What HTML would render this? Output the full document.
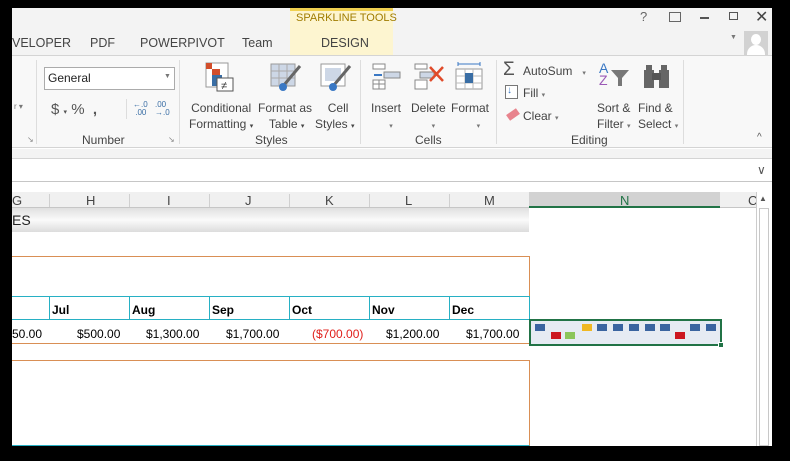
<!DOCTYPE html>
<html><head><meta charset="utf-8"><style>
*{margin:0;padding:0;box-sizing:border-box}
body{width:790px;height:461px;background:#000;position:relative;overflow:hidden;font-family:"Segoe UI","Liberation Sans",sans-serif;font-size:12px;color:#444}
.a{position:absolute}
.t{position:absolute;white-space:nowrap}
.g{font-family:"Liberation Sans",Arial,sans-serif;font-size:12px;color:#000}
.sq{position:absolute;width:10px;height:7px}
</style></head><body>
<div class="a" style="left:12px;top:8px;width:760px;height:438px;background:#fff"></div>
<div class="a" style="left:12px;top:8px;width:760px;height:47px;background:#f3f3f3"></div>
<div class="a" style="left:290px;top:8px;width:103px;height:47px;background:#fdf5d0;border-top:3px solid #f0d050"></div>
<div class="t" style="left:296px;top:12px;font-size:11px;color:#a07c00">SPARKLINE TOOLS</div>
<div class="t" style="left:12px;top:36px;font-size:12.5px">VELOPER</div>
<div class="t" style="left:90px;top:36px;font-size:12.5px">PDF</div>
<div class="t" style="left:140px;top:36px;font-size:12.5px">POWERPIVOT</div>
<div class="t" style="left:242px;top:36px;font-size:12.5px">Team</div>
<div class="t" style="left:321px;top:36px;font-size:12.5px">DESIGN</div>
<div class="t" style="left:640px;top:9px;font-size:13px;color:#666">?</div>
<div class="a" style="left:669px;top:12px;width:12px;height:10px;border:1px solid #666"></div>
<div class="a" style="left:700px;top:17px;width:9px;height:2px;background:#555"></div>
<div class="a" style="left:729px;top:12px;width:9px;height:8px;border:1px solid #555"></div>
<div class="t" style="left:755px;top:7px;font-size:16px;color:#444">✕</div>
<div class="t" style="left:730px;top:34px;font-size:7px;color:#777">▼</div>
<div class="a" style="left:744px;top:31px;width:24px;height:24px;background:#d2d2d2"></div>
<div class="a" style="left:751px;top:34px;width:10px;height:11px;border-radius:50%;background:#fff"></div>
<div class="a" style="left:747px;top:45px;width:18px;height:10px;border-radius:9px 9px 0 0;background:#fff"></div>
<div class="a" style="left:12px;top:55px;width:760px;height:93px;background:#f8f8f8;border-top:1px solid #d4d4d4;border-bottom:1px solid #d4d4d4"></div>
<div class="a" style="left:36px;top:60px;width:1px;height:84px;background:#ddd"></div>
<div class="a" style="left:179px;top:60px;width:1px;height:84px;background:#ddd"></div>
<div class="a" style="left:360px;top:60px;width:1px;height:84px;background:#ddd"></div>
<div class="a" style="left:496px;top:60px;width:1px;height:84px;background:#ddd"></div>
<div class="a" style="left:683px;top:60px;width:1px;height:84px;background:#ddd"></div>
<div class="t" style="left:14px;top:102px;font-size:8px;color:#777">r ▾</div>
<div class="a" style="left:44px;top:67px;width:131px;height:23px;background:#fff;border:1px solid #ababab"></div>
<div class="t" style="left:48px;top:71px;color:#222">General</div>
<div class="t" style="left:164px;top:73px;font-size:7px;color:#777">▼</div>
<div class="t" style="left:51px;top:101px;font-size:15px;color:#555">$ <span style="font-size:7px">▾</span> %&nbsp; <b>,</b></div>
<div class="a" style="left:126px;top:99px;width:1px;height:20px;background:#ddd"></div>
<div class="t" style="left:133px;top:101px;font-size:8px;line-height:8px;color:#3a6ea5">←.0<br>&nbsp;.00</div>
<div class="t" style="left:155px;top:101px;font-size:8px;line-height:8px;color:#3a6ea5">.00<br>→.0</div>
<div class="t" style="left:82px;top:133px">Number</div>
<div class="t" style="left:27px;top:135px;font-size:8px;color:#888">↘</div>
<div class="t" style="left:168px;top:135px;font-size:8px;color:#888">↘</div>
<svg class="a" style="left:205px;top:62px" width="30" height="30"><rect x="1" y="1" width="22" height="24" fill="#fff" stroke="#999"/><rect x="1" y="1" width="6" height="6" fill="#d24e2b"/><rect x="7" y="7" width="8" height="6" fill="#d24e2b"/><rect x="7" y="13" width="10" height="5" fill="#3a6ea5"/><rect x="7" y="18" width="6" height="6" fill="#3a6ea5"/><rect x="12" y="16" width="16" height="13" fill="#fff" stroke="#555"/><text x="16" y="27" font-size="11" fill="#333">≠</text></svg>
<svg class="a" style="left:270px;top:63px" width="32" height="30"><rect x="1" y="1" width="24" height="22" fill="#cdd7e6" stroke="#999"/><path d="M1 8h24M1 15h24M9 1v22M17 1v22" stroke="#aaa"/><path d="M30 3L14 22" stroke="#666" stroke-width="3"/><circle cx="13" cy="24" r="4" fill="#3a78c4"/></svg>
<svg class="a" style="left:320px;top:63px" width="32" height="30"><rect x="1" y="1" width="24" height="22" fill="#fff" stroke="#999"/><rect x="5" y="5" width="16" height="13" fill="#cdd7e6"/><path d="M30 3L14 22" stroke="#666" stroke-width="3"/><circle cx="13" cy="24" r="4" fill="#3a78c4"/></svg>
<div class="t" style="left:189px;top:100px;line-height:16px;text-align:center">Conditional<br>Formatting <span style="font-size:7px">▾</span></div>
<div class="t" style="left:258px;top:100px;line-height:16px;text-align:center">Format as<br>&nbsp;Table <span style="font-size:7px">▾</span></div>
<div class="t" style="left:315px;top:100px;line-height:16px;text-align:center">&nbsp;&nbsp;Cell<br>Styles <span style="font-size:7px">▾</span></div>
<div class="t" style="left:255px;top:133px">Styles</div>
<svg class="a" style="left:372px;top:63px" width="30" height="28"><rect x="1" y="1" width="12" height="5" fill="#fff" stroke="#888"/><rect x="1" y="17" width="12" height="9" fill="#fff" stroke="#888"/><path d="M1 21h12M7 17v9" stroke="#888"/><rect x="12" y="9" width="16" height="6" fill="#cdd7e6" stroke="#888"/><path d="M2 12h8" stroke="#3a78c4" stroke-width="2"/></svg>
<svg class="a" style="left:414px;top:63px" width="32" height="28"><rect x="1" y="1" width="12" height="5" fill="#fff" stroke="#888"/><rect x="1" y="17" width="12" height="9" fill="#fff" stroke="#888"/><rect x="6" y="9" width="14" height="6" fill="#cdd7e6" stroke="#888"/><path d="M16 4l13 14M29 4L16 18" stroke="#e04b2a" stroke-width="2.5"/></svg>
<svg class="a" style="left:455px;top:61px" width="30" height="32"><path d="M3 3h22M3 1v4M25 1v4" stroke="#3a78c4"/><rect x="1" y="8" width="26" height="20" fill="#fff" stroke="#999"/><path d="M1 15h26M1 22h26M10 8v20M18 8v20" stroke="#bbb"/><rect x="10" y="12" width="8" height="10" fill="#3a6ea5"/></svg>
<div class="t" style="left:371px;top:100px;line-height:16px;text-align:center">Insert<br>&nbsp;&nbsp;&nbsp;<span style="font-size:7px;color:#777">▾</span></div>
<div class="t" style="left:411px;top:100px;line-height:16px;text-align:center">Delete<br>&nbsp;&nbsp;&nbsp;<span style="font-size:7px;color:#777">▾</span></div>
<div class="t" style="left:451px;top:100px;line-height:16px;text-align:center">Format<br>&nbsp;&nbsp;&nbsp;&nbsp;&nbsp;<span style="font-size:7px;color:#777">▾</span></div>
<div class="t" style="left:415px;top:133px">Cells</div>
<div class="t" style="left:503px;top:59px;font-size:19px;color:#555">Σ</div>
<div class="t" style="left:523px;top:64px">AutoSum&nbsp;&nbsp;&nbsp;<span style="font-size:7px;color:#777">▾</span></div>
<div class="a" style="left:505px;top:85px;width:13px;height:14px;border:1px solid #777;background:#fff"></div>
<div class="t" style="left:507px;top:85px;font-size:10px;color:#3a78c4">↓</div>
<div class="t" style="left:523px;top:86px">Fill <span style="font-size:7px;color:#777">▾</span></div>
<div class="a" style="left:507px;top:111px;width:12px;height:7px;background:#e8838d;transform:rotate(-35deg)"></div>
<div class="t" style="left:523px;top:109px">Clear <span style="font-size:7px;color:#777">▾</span></div>
<div class="t" style="left:599px;top:62px;font-size:14px;line-height:12px;color:#3a78c4">A<br><span style="color:#9b59b6">Z</span></div>
<svg class="a" style="left:610px;top:69px" width="20" height="18"><path d="M1 1h18l-7 8v8h-4v-8z" fill="#777"/></svg>
<svg class="a" style="left:642px;top:64px" width="30" height="26"><rect x="2" y="6" width="10" height="18" fill="#666"/><rect x="17" y="6" width="10" height="18" fill="#666"/><rect x="10" y="9" width="9" height="7" fill="#555"/><rect x="4" y="1" width="6" height="6" fill="#666"/><rect x="19" y="1" width="6" height="6" fill="#666"/></svg>
<div class="t" style="left:597px;top:100px;line-height:16px">Sort &amp;<br>Filter <span style="font-size:7px;color:#777">▾</span></div>
<div class="t" style="left:638px;top:100px;line-height:16px">Find &amp;<br>Select <span style="font-size:7px;color:#777">▾</span></div>
<div class="t" style="left:571px;top:133px">Editing</div>
<div class="t" style="left:757px;top:132px;font-size:10px;color:#555">^</div>
<div class="a" style="left:12px;top:149px;width:760px;height:10px;background:#f3f3f3;border-bottom:1px solid #d4d4d4"></div>
<div class="a" style="left:12px;top:181px;width:760px;height:1px;background:#c6c6c6"></div>
<div class="t" style="left:757px;top:163px;font-size:12px;color:#555">∨</div>
<div class="a" style="left:12px;top:192px;width:744px;height:16px;background:#f0f0f0;border-bottom:1px solid #c6c6c6"></div>
<div class="a" style="left:529px;top:192px;width:191px;height:16px;background:#d2d2d2;border-bottom:2px solid #217346"></div>
<div class="g t" style="left:12px;top:193px;font-size:13px;color:#444">G</div>
<div class="g t" style="left:86px;top:193px;font-size:13px;color:#444">H</div>
<div class="g t" style="left:167px;top:193px;font-size:13px;color:#444">I</div>
<div class="g t" style="left:245px;top:193px;font-size:13px;color:#444">J</div>
<div class="g t" style="left:325px;top:193px;font-size:13px;color:#444">K</div>
<div class="g t" style="left:405px;top:193px;font-size:13px;color:#444">L</div>
<div class="g t" style="left:484px;top:193px;font-size:13px;color:#444">M</div>
<div class="g t" style="left:620px;top:193px;font-size:13px;color:#217346">N</div>
<div class="g t" style="left:748px;top:193px;font-size:13px;color:#444">C</div>
<div class="a" style="left:49px;top:194px;width:1px;height:13px;background:#d0d0d0"></div>
<div class="a" style="left:129px;top:194px;width:1px;height:13px;background:#d0d0d0"></div>
<div class="a" style="left:209px;top:194px;width:1px;height:13px;background:#d0d0d0"></div>
<div class="a" style="left:289px;top:194px;width:1px;height:13px;background:#d0d0d0"></div>
<div class="a" style="left:369px;top:194px;width:1px;height:13px;background:#d0d0d0"></div>
<div class="a" style="left:449px;top:194px;width:1px;height:13px;background:#d0d0d0"></div>
<div class="a" style="left:756px;top:192px;width:16px;height:254px;background:#fff;border-left:1px solid #ccc"></div>
<div class="a" style="left:759px;top:208px;width:10px;height:238px;border:1px solid #c8c8c8;background:#fff"></div>
<div class="t" style="left:759px;top:194px;font-size:8px;color:#555">▲</div>
<div class="a" style="left:12px;top:208px;width:517px;height:24px;background:linear-gradient(#e0e0e0,#fafafa 50%,#dcdcdc)"></div>
<div class="g t" style="left:12px;top:212px;font-size:14px;color:#222">ES</div>
<div class="a" style="left:12px;top:256px;width:518px;height:41px;border:1px solid #d98f55;border-left:none;border-bottom:none"></div>
<div class="a" style="left:12px;top:296px;width:518px;height:24px;border-top:1px solid #27b0c4;border-bottom:1px solid #27b0c4"></div>
<div class="a" style="left:49px;top:296px;width:1px;height:24px;background:#27b0c4"></div>
<div class="a" style="left:129px;top:296px;width:1px;height:24px;background:#27b0c4"></div>
<div class="a" style="left:209px;top:296px;width:1px;height:24px;background:#27b0c4"></div>
<div class="a" style="left:289px;top:296px;width:1px;height:24px;background:#27b0c4"></div>
<div class="a" style="left:369px;top:296px;width:1px;height:24px;background:#27b0c4"></div>
<div class="a" style="left:449px;top:296px;width:1px;height:24px;background:#27b0c4"></div>
<div class="a" style="left:529px;top:296px;width:1px;height:24px;background:#27b0c4"></div>
<div class="g t" style="left:52px;top:303px;font-weight:bold">Jul</div>
<div class="g t" style="left:132px;top:303px;font-weight:bold">Aug</div>
<div class="g t" style="left:212px;top:303px;font-weight:bold">Sep</div>
<div class="g t" style="left:292px;top:303px;font-weight:bold">Oct</div>
<div class="g t" style="left:372px;top:303px;font-weight:bold">Nov</div>
<div class="g t" style="left:452px;top:303px;font-weight:bold">Dec</div>
<div class="a" style="left:12px;top:343px;width:518px;height:1px;background:#d98f55"></div>
<div class="g t" style="left:12px;top:327px">50.00</div>
<div class="g t" style="left:77px;top:327px">$500.00</div>
<div class="g t" style="left:146px;top:327px">$1,300.00</div>
<div class="g t" style="left:226px;top:327px">$1,700.00</div>
<div class="g t" style="left:312px;top:327px;color:#e0201c">($700.00)</div>
<div class="g t" style="left:386px;top:327px">$1,200.00</div>
<div class="g t" style="left:466px;top:327px">$1,700.00</div>
<div class="a" style="left:12px;top:360px;width:518px;height:86px;border:1px solid #d98f55;border-left:none;border-bottom:1px solid #27b0c4"></div>
<div class="a" style="left:529px;top:319px;width:193px;height:27px;background:#e6ebf3;border:2px solid #217346"></div>
<div class="a" style="left:718px;top:342px;width:6px;height:6px;background:#217346;border:1px solid #fff"></div>
<div class="sq" style="left:535px;top:324px;background:#3a64a0"></div>
<div class="sq" style="left:551px;top:332px;background:#cc1720"></div>
<div class="sq" style="left:565px;top:332px;background:#8bc55a"></div>
<div class="sq" style="left:582px;top:324px;background:#f0b823"></div>
<div class="sq" style="left:597px;top:324px;background:#3a64a0"></div>
<div class="sq" style="left:613px;top:324px;background:#3a64a0"></div>
<div class="sq" style="left:629px;top:324px;background:#3a64a0"></div>
<div class="sq" style="left:645px;top:324px;background:#3a64a0"></div>
<div class="sq" style="left:660px;top:324px;background:#3a64a0"></div>
<div class="sq" style="left:675px;top:332px;background:#cc1720"></div>
<div class="sq" style="left:690px;top:324px;background:#3a64a0"></div>
<div class="sq" style="left:706px;top:324px;background:#3a64a0"></div>
</body></html>
